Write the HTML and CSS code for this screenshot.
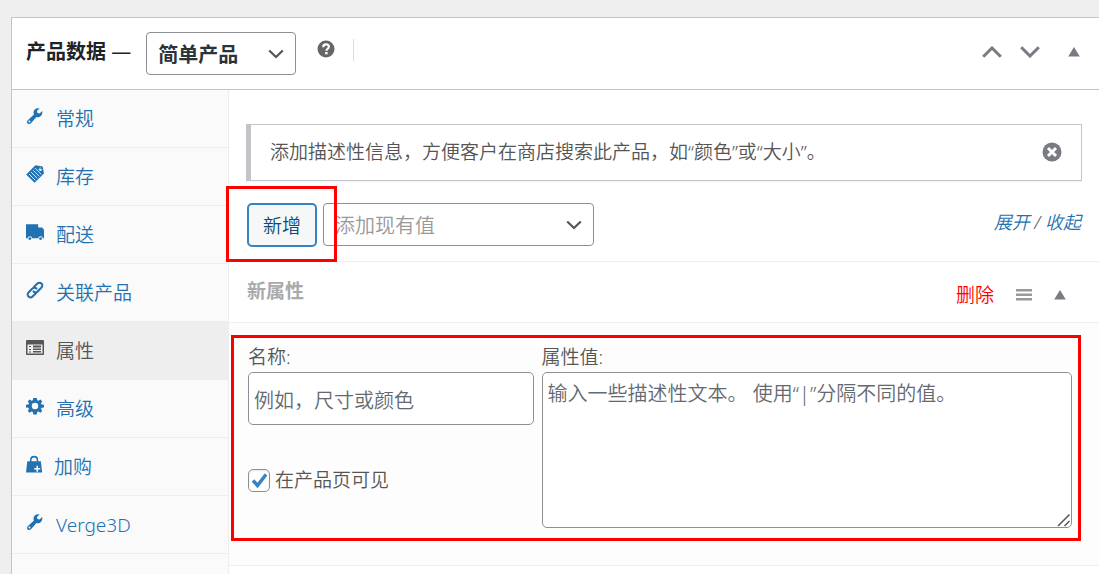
FILE: index.html
```html
<!DOCTYPE html>
<html lang="zh-CN">
<head>
<meta charset="utf-8">
<meta name="viewport" content="width=device-width, initial-scale=1">
<title>产品数据</title>
<link rel="stylesheet" href="styles.css">
</head>
<body>
<svg class="sprite" aria-hidden="true">
  <symbol id="wrench" viewBox="0 0 20 20"><path d="M16.700 9.700c1.400-1.400 1.800-3.400 1.200-5.200l-2.800 2.800-2.300-.6-.6-2.300L15 1.600c-1.800-.6-3.800-.2-5.200 1.200-1.500 1.500-1.800 3.700-1 5.500L2 14.600c-1.100 1-1.200 2.700-.2 3.700 1 1 2.700.9 3.700-.2l6.100-6.900c1.700.6 3.700 0 5.100-1.500zM3.800 17.300a1.100 1.100 0 1 1 0-2.200 1.100 1.100 0 0 1 0 2.200z" fill-rule="evenodd"/></symbol>
  <symbol id="chevron" viewBox="0 0 16 10"><path d="M1.200 1.500 8 8l6.800-6.500" fill="none" stroke="currentColor" stroke-width="2.200"/></symbol>
  <symbol id="triangle" viewBox="0 0 12 10"><path d="M6 0 11.800 9.500H.2z"/></symbol>
</svg>
<main class="panel">
  <header class="panel-head">
    <h2 class="panel-title"><label for="type">产品数据 <span class="dash">—</span></label></h2>
    <div class="select-wrap type-wrap">
      <select class="select type-select" id="type"><option>简单产品</option></select>
      <svg class="select-arrow"><use href="#chevron"/></svg>
    </div>
    <button class="icon-button help" type="button" aria-label="帮助">
      <svg viewBox="0 0 18 18" width="18" height="18"><circle cx="9" cy="9" r="8.500"/><path d="M6.200 7.200C6.200 5.300 7.300 4.400 9 4.400s2.900.9 2.900 2.400c0 2-2.500 1.900-2.500 4" fill="none" stroke="#fff" stroke-width="2.200"/><path d="M8.100 12h2.500v2.300H8.100z" fill="#fff"/></svg>
    </button>
    <span class="divider"></span>
    <div class="panel-actions">
      <button class="icon-button" type="button" aria-label="上移"><svg viewBox="0 0 20 12" width="20" height="12"><path d="m1.200 10.800 8.800-8.800 8.800 8.800" fill="none" stroke="currentColor" stroke-width="3"/></svg></button>
      <button class="icon-button" type="button" aria-label="下移"><svg viewBox="0 0 20 12" width="20" height="12"><path d="m1.200 1.200 8.800 8.800 8.800-8.800" fill="none" stroke="currentColor" stroke-width="3"/></svg></button>
      <button class="icon-button toggle" type="button" aria-label="切换面板"><svg width="12" height="10"><use href="#triangle"/></svg></button>
    </div>
  </header>
  <div class="panel-body">
    <nav class="tabs">
      <a class="tab" href="#general"><svg class="tab-icon"><use href="#wrench"/></svg>常规</a>
      <a class="tab" href="#stock"><svg class="tab-icon" viewBox="0 0 20 20"><path d="M10.500.2 18.500 1.800 20 9.500 9.500 19.800.2 10.500z"/><path d="m10 3.500 7 7M7.800 5.700l7 7M5.600 7.900l7 7M3.400 10.100l7 7" stroke="#fafafa" stroke-width="1" fill="none"/><circle cx="16" cy="4.800" r="1.900" fill="#fafafa"/><path d="m14 4.800 3-1.500 1 2.500" fill="none" stroke="currentColor" stroke-width=".9"/></svg>库存</a>
      <a class="tab" href="#shipping"><svg class="tab-icon" viewBox="0 0 20 20"><path d="M0 1.500h13.500V5H18l2 2.500V17h-1.200a2.700 2.700 0 0 0-5.300 0H7a2.700 2.700 0 0 0-5.300 0H0z"/><circle cx="4.300" cy="17.300" r="1.600"/><circle cx="16.200" cy="17.300" r="1.600"/></svg>配送</a>
      <a class="tab" href="#linked"><svg class="tab-icon" viewBox="0 0 20 20"><g fill="none" stroke="currentColor" stroke-width="2.300" stroke-linecap="round"><path d="m9 6.500 3.700-3.700a3.100 3.100 0 0 1 4.500 4.500l-4.300 4.300a3.100 3.100 0 0 1-4.500 0"/><path d="m11 13.500-3.700 3.700a3.100 3.100 0 0 1-4.500-4.500l4.300-4.300a3.100 3.100 0 0 1 4.500 0"/></g></svg>关联产品</a>
      <a class="tab tab-current" href="#attributes" aria-current="page"><svg class="tab-icon" viewBox="0 0 18 18"><path fill-rule="evenodd" d="M1 1h16q1 0 1 1v13q0 1-1 1H1q-1 0-1-1V2q0-1 1-1zm.5 4.500v9h15v-9z"/><path d="M3 7h2v1H3zm0 3h2v1H3zm0 2.500h2v1H3zM7 6.500h8v2H7zm0 3h8v1.500H7zm0 2.500h8v1.500H7z"/></svg>属性</a>
      <a class="tab" href="#advanced"><svg class="tab-icon" viewBox="0 0 20 20"><path fill-rule="evenodd" d="M8 1h4l.4 2.500 1.400.6L16 2.700l2 2-1.300 2.200.6 1.400 2.700.2v3.200l-2.700.3-.6 1.400 1.300 2.200-2 2-2.200-1.400-1.400.6-.4 2.700H8l-.4-2.700-1.400-.6L4 17.600l-2-2 1.300-2.200-.6-1.400-2.700-.3V8.500l2.700-.2.600-1.400L2 4.700l2-2 2.200 1.400 1.400-.6zM10 6.500a3.600 3.600 0 1 0 0 7.200 3.600 3.600 0 0 0 0-7.200z"/></svg>高级</a>
      <a class="tab tab-addons" href="#addons"><svg class="tab-icon" viewBox="0 0 20 20"><path d="M5.300 7.500V5.500a3.700 3.700 0 0 1 7.400 0v2" fill="none" stroke="currentColor" stroke-width="1.700"/><path d="M1.500 7h15L18 19.500H0z"/><path d="M12.500 12v6.500M9.200 15.300h6.600" stroke="#fff" stroke-width="1.700"/></svg>加购</a>
      <a class="tab" href="#verge3d"><svg class="tab-icon"><use href="#wrench"/></svg>Verge3D</a>
    </nav>
    <section class="content">
      <div class="notice">
        <p class="notice-text">添加描述性信息，方便客户在商店搜索此产品，如“颜色”或“大小”。</p>
        <button class="icon-button" type="button" aria-label="忽略此通知"><svg viewBox="0 0 20 20" width="20" height="20"><circle cx="10" cy="10" r="9.500"/><path d="m6 6 8 8m0-8-8 8" stroke="#fff" stroke-width="3"/></svg></button>
      </div>
      <div class="toolbar">
        <div class="marked marked-add"><button class="add-button" type="button">新增</button></div>
        <div class="select-wrap existing-wrap">
          <select class="select existing-select" aria-label="添加现有值"><option>添加现有值</option></select>
          <svg class="select-arrow"><use href="#chevron"/></svg>
        </div>
        <div class="expand"><a href="#expand">展开</a> / <a href="#close">收起</a></div>
      </div>
      <div class="attribute-head">
        <h3 class="attribute-title">新属性</h3>
        <div class="attribute-actions">
          <a class="remove" href="#remove">删除</a>
          <svg class="drag" viewBox="0 0 16 12" width="16" height="12"><path d="M0 0h16v2.500H0zm0 4.500h16V7H0zM0 9h16v2.500H0z"/></svg>
          <button class="icon-button" type="button" aria-label="切换"><svg width="12" height="10"><use href="#triangle"/></svg></button>
        </div>
      </div>
      <div class="attribute-body">
        <div class="marked marked-fields">
          <div class="name-column">
            <label class="field-label" for="name">名称:</label>
            <input class="field name-input" id="name" type="text" placeholder="例如，尺寸或颜色">
            <label class="visible"><input class="checkbox" type="checkbox" checked><svg class="tick" viewBox="0 0 22 22"><path d="m5 11.500 4.500 5L18 5.500" fill="none" stroke="currentColor" stroke-width="3.400"/></svg>在产品页可见</label>
          </div>
          <div class="value-column">
            <label class="field-label" for="values">属性值:</label>
            <div class="textarea-wrap">
              <textarea class="field values" id="values" placeholder="输入一些描述性文本。 使用“|”分隔不同的值。"></textarea>
              <svg class="grip" viewBox="0 0 14 14"><path d="M1 13 12.500 1.500M7.500 13l5-5" stroke="currentColor" stroke-width="1.500"/></svg>
            </div>
          </div>
        </div>
      </div>
    </section>
  </div>
</main>
</body>
</html>
```
FILE: styles.css
```css
* {
  box-sizing: border-box;
}

html {
  overflow: hidden;
}

body {
  margin: 0;
  padding: 17px 0 0 11px;
  background: #efefef;
  color: #50575e;
  font: 350 19px/24px "Noto Sans", "Noto Sans CJK SC", sans-serif;
}

a {
  color: #2271b1;
  text-decoration: none;
}

h2, h3, p {
  margin: 0;
}

svg {
  display: block;
  flex: none;
  fill: currentColor;
}

button, input, select, textarea {
  font-family: inherit;
  font-weight: inherit;
}

.sprite {
  display: none;
}

.icon-button {
  padding: 0;
  border: 0;
  background: none;
  color: #787c82;
}

.panel {
  display: flex;
  flex-direction: column;
  min-height: calc(100vh - 17px);
  border: solid #c3c4c7;
  border-width: 1px 0 0 1px;
  background: #fff;
}

.panel-head {
  display: flex;
  align-items: center;
  height: 72px;
  padding: 0 19px 0 14px;
  border-bottom: 1px solid #c3c4c7;
}

.panel-title {
  padding-bottom: 4px;
  color: #1d2327;
  font-size: 20px;
  font-weight: 700;
  white-space: nowrap;
}

.dash {
  font-weight: 400;
}

.select-wrap {
  position: relative;
}

.select {
  width: 100%;
  height: 43px;
  padding: 2px 11px 0;
  border: 1px solid #8c8f94;
  border-radius: 4px;
  appearance: none;
  background: #fff;
  font-size: 20px;
}

.select-arrow {
  position: absolute;
  top: 17px;
  right: 12px;
  width: 16px;
  height: 10px;
  color: #50575e;
  pointer-events: none;
}

.type-wrap {
  width: 150px;
  margin-left: 15px;
}

.type-select {
  color: #2c3338;
  font-weight: 700;
}

.help {
  margin: 0 18px 10px 21px;
  color: #666;
}

.divider {
  width: 1px;
  height: 22px;
  margin-bottom: 8px;
  background: #dcdcde;
}

.panel-actions {
  display: flex;
  align-items: center;
  gap: 18px;
  margin-left: auto;
  padding-bottom: 3px;
}

.toggle {
  margin-left: 10px;
}

.panel-body {
  display: flex;
  flex: 1;
}

.tabs {
  flex: none;
  width: 217px;
  border-right: 1px solid #eee;
  background: #fafafa;
}

.tab {
  display: flex;
  align-items: center;
  gap: 12px;
  height: 58px;
  padding-left: 14px;
  border-bottom: 1px solid #eee;
}

.tab-addons {
  gap: 10px;
}

.tab-icon {
  width: 18px;
  height: 18px;
  margin-bottom: 5px;
}

.tab-current {
  background: #eee;
  color: #555;
}

.content {
  flex: 1;
  min-width: 0;
}

.notice {
  display: flex;
  align-items: center;
  justify-content: space-between;
  height: 57px;
  margin: 34px 17px 0;
  padding: 0 19px 2px;
  border: 1px solid #c3c4c7;
  border-left-width: 5px;
  box-shadow: 0 1px 1px rgba(0, 0, 0, .04);
  color: #555;
}

.toolbar {
  display: flex;
  align-items: center;
  height: 81px;
  padding: 7px 18px 0;
  border-bottom: 1px solid #eee;
}

.marked {
  position: relative;
}

.marked::after {
  position: absolute;
  z-index: 1;
  border: 3px solid #f00;
  content: "";
  pointer-events: none;
}

.marked-add::after {
  inset: -17px -20px -15px -21px;
}

.add-button {
  display: block;
  width: 70px;
  height: 44px;
  padding: 0;
  border: 2px solid #3582c4;
  border-radius: 5px;
  background: #f6f7f7;
  color: #0a4b78;
  font-size: 19px;
}

.existing-wrap {
  width: 271px;
  margin-left: 6px;
}

.existing-select {
  color: #999;
}

.expand {
  margin-left: auto;
  padding-bottom: 5px;
  font-size: 18px;
  font-style: italic;
}

.attribute-head {
  display: flex;
  align-items: center;
  justify-content: space-between;
  height: 61px;
  padding: 0 33px 0 18px;
  border-bottom: 1px solid #eee;
}

.attribute-title {
  padding-bottom: 2px;
  color: #aaa;
  font-size: 19px;
  font-weight: 700;
}

.attribute-actions {
  display: flex;
  align-items: center;
  gap: 22px;
  padding-top: 6px;
}

.remove {
  color: #f00;
}

.drag {
  color: #999;
}

.attribute-body {
  padding: 22px 27px 37px 19px;
  border-bottom: 1px solid #eee;
  background: #fdfdfd;
}

.marked-fields {
  display: flex;
  gap: 8px;
}

.marked-fields::after {
  inset: -10px -9px -13px -17px;
}

.name-column {
  flex: 35 1 0;
}

.value-column {
  flex: 65 1 0;
}

.field-label {
  display: block;
  height: 27px;
  color: #555;
}

.field {
  display: block;
  width: 100%;
  padding: 0 5px;
  border: 1px solid #8c8f94;
  border-radius: 5px;
  background: #fff;
  color: #2c3338;
  font-size: 20px;
}

.field::placeholder {
  color: #646970;
  opacity: 1;
}

.name-input {
  height: 53px;
  padding-top: 3px;
}

.visible {
  display: flex;
  position: relative;
  align-items: center;
  gap: 5px;
  margin-top: 43px;
  color: #555;
}

.checkbox {
  width: 22px;
  height: 23px;
  margin: 0;
  border: 1px solid #8c8f94;
  border-radius: 5px;
  appearance: none;
  background: #fff;
  box-shadow: inset 0 1px 2px rgba(0, 0, 0, .1);
}

.tick {
  position: absolute;
  top: 1px;
  left: 0;
  width: 22px;
  height: 22px;
  color: #3582c4;
  visibility: hidden;
}

.checkbox:checked + .tick {
  visibility: visible;
}

.textarea-wrap {
  position: relative;
}

.values {
  height: 156px;
  padding-top: 6px;
  line-height: 30px;
  resize: none;
}

.grip {
  position: absolute;
  right: 1px;
  bottom: 1px;
  width: 14px;
  height: 14px;
  color: #555;
}
```
